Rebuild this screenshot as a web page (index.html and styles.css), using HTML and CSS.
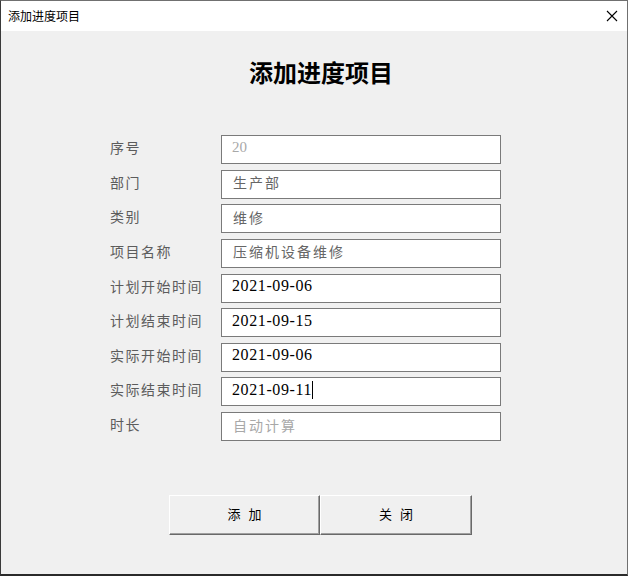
FILE: index.html
```html
<!DOCTYPE html>
<html lang="zh-CN">
<head>
<meta charset="utf-8">
<title>添加进度项目</title>
<link rel="stylesheet" href="styles.css">
</head>
<body>
<div class="window">
  <div class="titlebar">
    <span class="title">添加进度项目</span>
    <svg class="close" width="12" height="12" viewBox="0 0 12 12" aria-label="关闭">
      <path d="M1 1 L11 11 M11 1 L1 11" stroke="#000" stroke-width="1.1" fill="none"/>
    </svg>
  </div>
  <div class="content">
    <h1 class="heading">添加进度项目</h1>
    <div class="form">
      <div class="label">序号</div>
      <div class="field placeholder num">20</div>
      <div class="label">部门</div>
      <div class="field cjk">生产部</div>
      <div class="label">类别</div>
      <div class="field cjk">维修</div>
      <div class="label">项目名称</div>
      <div class="field cjk">压缩机设备维修</div>
      <div class="label">计划开始时间</div>
      <div class="field date">2021-09-06</div>
      <div class="label">计划结束时间</div>
      <div class="field date">2021-09-15</div>
      <div class="label">实际开始时间</div>
      <div class="field date">2021-09-06</div>
      <div class="label">实际结束时间</div>
      <div class="field date">2021-09-11<span class="caret"></span></div>
      <div class="label">时长</div>
      <div class="field placeholder cjk">自动计算</div>
    </div>
    <div class="buttons">
      <button class="btn btn-left">添加</button>
      <button class="btn btn-right">关闭</button>
    </div>
  </div>
</div>
</body>
</html>
```
FILE: styles.css
```css
html, body {
  margin: 0;
  padding: 0;
  background: #f0f0f0;
}
body {
  font-family: "Noto Sans CJK SC", "Noto Sans", sans-serif;
}
.window {
  width: 628px;
  height: 576px;
  box-sizing: border-box;
  border: 1px solid #707070;
  border-left-color: #3a3a3a;
  border-bottom: 2px solid #2a2a2a;
  display: flex;
  flex-direction: column;
  background: #f0f0f0;
}
.titlebar {
  height: 30px;
  background: #ffffff;
  display: flex;
  align-items: center;
  justify-content: space-between;
  padding: 0 9px 0 7px;
  flex: none;
}
.title {
  font-size: 12px;
  color: #000;
  line-height: 16px;
}
.close {
  display: block;
}
.content {
  flex: 1;
  background: #f0f0f0;
}
.heading {
  margin: 25px 0 0 0;
  padding-left: 14px;
  text-align: center;
  font-size: 24px;
  line-height: 32px;
  font-weight: 700;
  color: #000;
}
.form {
  margin: 47px 0 0 109px;
  display: grid;
  grid-template-columns: 111px 280px;
  row-gap: 5.625px;
}
.label {
  font-size: 14px;
  line-height: 24px;
  letter-spacing: 1.5px;
  color: #5c5c5c;
}
.field {
  height: 29px;
  box-sizing: border-box;
  border: 1px solid #7a7a7a;
  background: #fff;
  padding: 0 0 4px 10px;
  display: flex;
  align-items: center;
  white-space: nowrap;
}
.field.cjk {
  font-size: 14px;
  letter-spacing: 2px;
  color: #666;
  padding-left: 11px;
}
.field.num {
  font-family: "Liberation Serif", serif;
  font-size: 15px;
}
.field.placeholder {
  color: #a8a8a8;
}
.field.date {
  font-family: "Liberation Serif", serif;
  font-size: 16px;
  letter-spacing: 0.6px;
  color: #000;
}
.caret {
  display: inline-block;
  width: 1px;
  height: 18px;
  background: #000;
  margin-left: -0.5px;
}
.buttons {
  margin: 54px 0 0 168px;
  display: flex;
}
.btn {
  height: 40px;
  box-sizing: border-box;
  background: #f0f0f0;
  border-top: 1px solid #ffffff;
  border-left: 1px solid #ffffff;
  border-right: 1px solid #696969;
  border-bottom: 1px solid #696969;
  box-shadow: inset -1px -1px 0 #a0a0a0;
  font-family: "Noto Sans CJK SC", sans-serif;
  font-size: 13px;
  letter-spacing: 8px;
  text-indent: 8px;
  color: #000;
  padding: 0 0 3px 0;
  margin: 0;
}
.btn-left {
  width: 151px;
}
.btn-right {
  width: 152px;
}
```
